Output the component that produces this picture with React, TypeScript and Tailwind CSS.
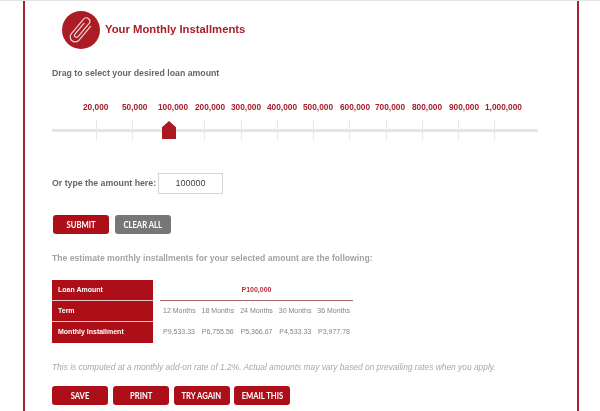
const labels: [string, string][] = [
  ["20,000", "w-[39px]"],
  ["50,000", "w-[36px]"],
  ["100,000", "w-[37px]"],
  ["200,000", "w-[36px]"],
  ["300,000", "w-[36px]"],
  ["400,000", "w-[36px]"],
  ["500,000", "w-[37px]"],
  ["600,000", "w-[35px]"],
  ["700,000", "w-[37px]"],
  ["800,000", "w-[37px]"],
  ["900,000", "w-[36px]"],
  ["1,000,000", "w-[38px]"],
];
const ticks = [0, 1, 3, 4, 5, 6, 7, 8, 9, 10, 11];
const terms = ["12 Months","18 Months","24 Months","30 Months","36 Months"];
const amounts = ["P9,533.33","P6,755.56","P5,366.67","P4,533.33","P3,977.78"];

function Btn({ children, gray }: { children: string; gray?: boolean }) {
  return (
    <button className={`w-[56px] h-[19px] rounded-[3px] text-white text-[9px] font-bold flex items-center justify-center whitespace-nowrap font-['Lato',sans-serif] ${gray ? "bg-[#777777]" : "bg-[#ad0f19]"}`}>
      <span className="scale-x-[0.85]">{children}</span>
    </button>
  );
}

export default function App() {
  return (
    <div className="w-[600px] h-[411px] overflow-hidden bg-white font-['Liberation_Sans',sans-serif] border-t border-[#e4e4e4] blur-[0.3px]">
      <div className="ml-[23px] w-[556px] h-full border-x-2 border-[#a5232b] pl-[27px] pr-[38px]">
        <div className="flex items-center pl-[10px] pt-[10px] gap-[5px]">
          <div className="w-[38px] h-[38px] rounded-full bg-[#ab1c24]">
            <svg width="38" height="38" viewBox="0 0 38 38" fill="none" stroke="#f0d5d5" strokeWidth="1.2" strokeLinecap="round" strokeLinejoin="round">
              <path transform="rotate(40 19 19)" d="M24 10 V28 A5 5 0 0 1 14 28 V9 A3.5 3.5 0 0 1 21 9 V26 A2 2 0 0 1 17 26 V12" />
            </svg>
          </div>
          <h1 className="text-[11.3px] font-bold text-[#a8202c] mb-[2px]">Your Monthly Installments</h1>
        </div>

        <p className="mt-[18px] text-[8.75px] font-bold text-[#666666] leading-[12px]">Drag to select your desired loan amount</p>

        <div className="mt-[22px] pl-[31px] flex">
          {labels.map(([l, w]) => (
            <div key={l} className={`${w} whitespace-nowrap text-[8.3px] font-bold text-[#a8202c] leading-[12px]`}>{l}</div>
          ))}
        </div>

        <div className="relative mt-[7px] h-[20px] w-[486px]">
          <div className="absolute left-0 right-0 top-[9px] h-[3px] bg-[#e6e6e6]" />
          <div className="absolute inset-0 pl-[26px] flex">
            {labels.map(([l], i) => (
              <div key={l} className="w-[36.25px] flex justify-center">
                {ticks.includes(i) && <div className="w-px h-[20px] bg-[#e8e8e8]" />}
              </div>
            ))}
          </div>
          <div className="absolute left-[110px] top-[1px] w-[14px] h-[18px] bg-[#ab1a22] [clip-path:polygon(50%_0,100%_35%,100%_100%,0_100%,0_35%)]" />
        </div>

        <div className="mt-[33px] flex items-center gap-[2px]">
          <span className="text-[8.75px] font-bold text-[#666666]">Or type the amount here:</span>
          <div className="w-[65px] h-[21px] border border-[#d4d4d4] flex items-center justify-center text-[9px] text-[#444444]">100000</div>
        </div>

        <div className="mt-[21px] ml-px flex gap-[6px]">
          <Btn>SUBMIT</Btn>
          <Btn gray>CLEAR ALL</Btn>
        </div>

        <p className="mt-[18px] text-[8.65px] font-bold text-[#a3a3a3] leading-[12px]">The estimate monthly installments for your selected amount are the following:</p>

        <div className="mt-[16px] flex">
          <div className="w-[101px] bg-[#ad0f19] text-white text-[7px] font-bold flex flex-col divide-y divide-[#e6c4c6]">
            <div className="h-[21px] flex items-center pl-[6px]">Loan Amount</div>
            <div className="h-[21px] box-border flex items-center pl-[6px]">Term</div>
            <div className="h-[21px] box-border flex items-center pl-[6px]">Monthly Installment</div>
          </div>
          <div className="ml-[7px] w-[193px] text-[7px] text-[#858585]">
            <div className="h-[21px] border-b border-[#a8686c] flex items-center justify-center font-bold text-[#b2323c]">P100,000</div>
            <div className="h-[21px] flex items-center justify-between px-[3px]">
              {terms.map((t) => <span key={t}>{t}</span>)}
            </div>
            <div className="h-[21px] flex items-center justify-between px-[3px]">
              {amounts.map((a) => <span key={a}>{a}</span>)}
            </div>
          </div>
        </div>

        <p className="mt-[18px] text-[8.4px] italic text-[#a8a8a8] leading-[12px] whitespace-nowrap">This is computed at a monthly add-on rate of 1.2%. Actual amounts may vary based on prevailing rates when you apply.</p>

        <div className="mt-[13px] flex gap-[4.8px]">
          <Btn>SAVE</Btn>
          <Btn>PRINT</Btn>
          <Btn>TRY AGAIN</Btn>
          <Btn>EMAIL THIS</Btn>
        </div>
      </div>
    </div>
  );
}
